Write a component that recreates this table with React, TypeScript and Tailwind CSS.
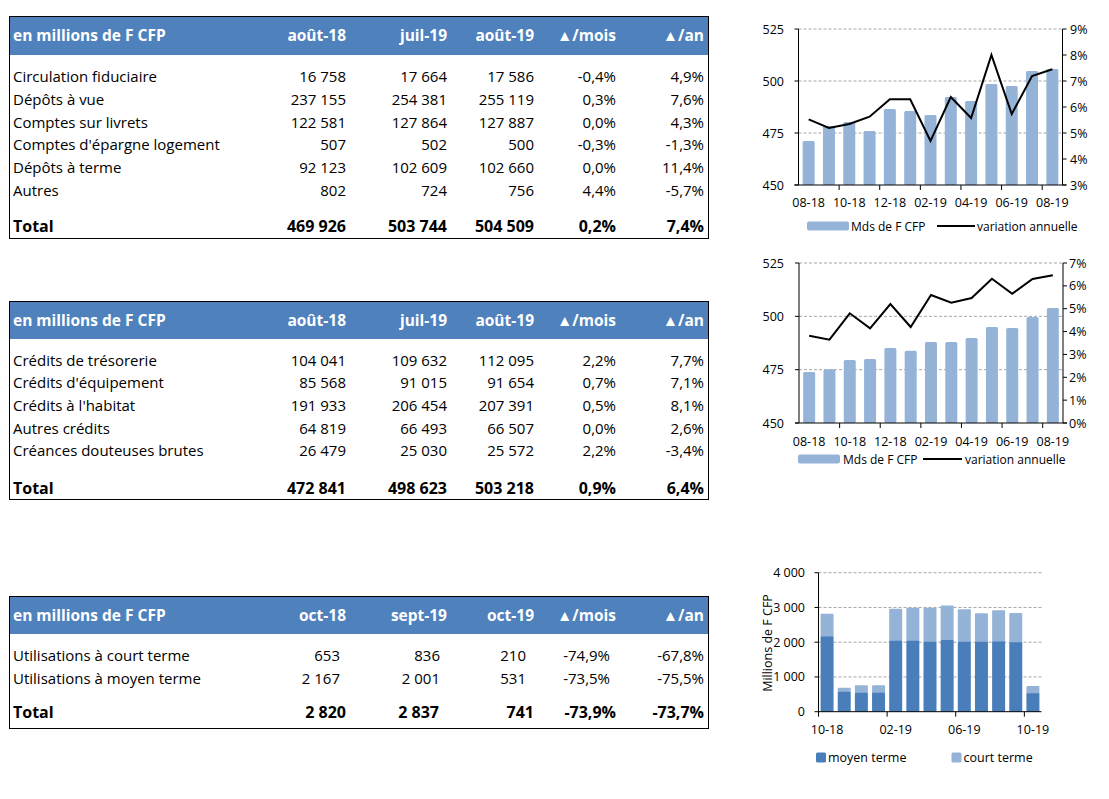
import React from "react";

const BAR = "#95b3d7";
const DARK = "#4a7ebb";
const GRID = "#a6a6a6";

type TRow = { label: string; v: string[]; pr?: string[] };

function DataTable({
  headers,
  rows,
  total,
  headerH,
  pt,
  totalMt,
  pb,
  className,
}: {
  headers: string[];
  rows: TRow[];
  total: TRow;
  headerH: string;
  pt: string;
  totalMt: string;
  pb: string;
  className?: string;
}) {
  const cols = "grid grid-cols-[236px_100px_101px_87px_82px_88px] pr-[4px]";
  return (
    <div className={`w-[700px] border border-black ${className ?? ""}`}>
      <div className={`${cols} ${headerH} bg-[#4f81bd] items-center text-white font-bold text-[15.5px]`}>
        {headers.map((h, i) => (
          <div key={i} className={i === 0 ? "pl-[3px] whitespace-nowrap" : "text-right whitespace-nowrap"}>
            {h}
          </div>
        ))}
      </div>
      <div className={`${pt} ${pb} text-[15px] text-black`}>
        {rows.map((r, ri) => (
          <div key={ri} className={`${cols} h-[22.66px] items-center`}>
            <div className="pl-[3px] whitespace-nowrap">{r.label}</div>
            {r.v.map((v, i) => (
              <div key={i} className={`text-right whitespace-nowrap ${r.pr ? r.pr[i] : ""}`}>
                {v}
              </div>
            ))}
          </div>
        ))}
        <div className={`${cols} h-[22.66px] items-center font-bold text-[16px] ${totalMt}`}>
          <div className="pl-[3px]">{total.label}</div>
          {total.v.map((v, i) => (
            <div key={i} className={`text-right whitespace-nowrap ${total.pr ? total.pr[i] : ""}`}>
              {v}
            </div>
          ))}
        </div>
      </div>
    </div>
  );
}

function ComboChart({
  top,
  L,
  R,
  T,
  B,
  leftLabels,
  rightLabels,
  barTops,
  lineYs,
  leftX,
  rightX,
  xLabelY,
  legY,
  legRectX,
  legText1X,
  legLine,
  legText2X,
}: {
  top: number;
  L: number;
  R: number;
  T: number;
  B: number;
  leftLabels: string[];
  rightLabels: string[];
  barTops: number[];
  lineYs: number[];
  leftX: number;
  rightX: number;
  xLabelY: number;
  legY: number;
  legRectX: number;
  legText1X: number;
  legLine: [number, number];
  legText2X: number;
}) {
  const n = 13;
  const cw = (R - L) / n;
  const xl = ["08-18", "10-18", "12-18", "02-19", "04-19", "06-19", "08-19"];
  const lstep = (B - T) / (leftLabels.length - 1);
  const rstep = (B - T) / (rightLabels.length - 1);
  return (
    <svg width={369} height={230} viewBox={`740 ${top} 369 230`} className="block">
      {leftLabels.slice(0, -1).map((_, k) => (
        <line key={k} x1={L} x2={R} y1={T + k * lstep} y2={T + k * lstep} stroke={GRID} strokeDasharray="3 2" strokeWidth={1} />
      ))}
      {barTops.map((y, i) => (
        <rect key={i} x={L + (i + 0.5) * cw - 6} y={y} width={12} height={B - y} fill={BAR} rx={1.5} />
      ))}
      <line x1={L} x2={L} y1={T} y2={B} stroke="#000" strokeWidth={1} />
      <line x1={R} x2={R} y1={T} y2={B} stroke="#000" strokeWidth={1} />
      <line x1={L - 4} x2={R + 4} y1={B} y2={B} stroke="#000" strokeWidth={1} />
      {leftLabels.map((_, k) => (
        <line key={k} x1={L - 4} x2={L} y1={T + k * lstep} y2={T + k * lstep} stroke="#000" />
      ))}
      {rightLabels.map((_, k) => (
        <line key={k} x1={R} x2={R + 4} y1={T + k * rstep} y2={T + k * rstep} stroke="#000" />
      ))}
      {[2, 4, 6, 8, 10, 12].map((k) => (
        <line key={k} x1={L + k * cw} x2={L + k * cw} y1={B} y2={B + 5} stroke="#000" />
      ))}
      <polyline
        points={lineYs.map((y, i) => `${L + (i + 0.5) * cw},${y}`).join(" ")}
        fill="none"
        stroke="#000"
        strokeWidth={2}
        strokeLinejoin="miter"
      />
      {leftLabels.map((t, k) => (
        <text key={k} x={leftX} y={T + k * lstep} textAnchor="end" dominantBaseline="central" fontSize={12.5} fill="#000">
          {t}
        </text>
      ))}
      {rightLabels.map((t, k) => (
        <text key={k} x={rightX} y={T + k * rstep} textAnchor="start" dominantBaseline="central" fontSize={12.5} fill="#000">
          {t}
        </text>
      ))}
      {xl.map((t, k) => (
        <text key={k} x={L + (2 * k + 0.5) * cw} y={xLabelY} textAnchor="middle" dominantBaseline="central" fontSize={12.5} fill="#000">
          {t}
        </text>
      ))}
      <rect x={legRectX} y={legY - 4.5} width={42} height={9} rx={2} fill={BAR} />
      <text x={legText1X} y={legY} dominantBaseline="central" fontSize={12} fill="#000">
        Mds de F CFP
      </text>
      <line x1={legLine[0]} x2={legLine[1]} y1={legY} y2={legY} stroke="#000" strokeWidth={2} />
      <text x={legText2X} y={legY} dominantBaseline="central" fontSize={12} fill="#000">
        variation annuelle
      </text>
    </svg>
  );
}

function StackChart() {
  const L = 818.5;
  const R = 1041.5;
  const B = 711.7;
  const T = 572.7;
  const sc = (B - T) / 4000;
  const cw = (R - L) / 13;
  const data: [number, number][] = [
    [2167, 653],
    [577, 115],
    [548, 212],
    [548, 212],
    [2040, 920],
    [2040, 948],
    [2010, 978],
    [2060, 995],
    [2010, 940],
    [2010, 826],
    [2020, 902],
    [2001, 836],
    [531, 210],
  ];
  const yl = ["4 000", "3 000", "2 000", "1 000", "0"];
  return (
    <svg width={369} height={230} viewBox="740 560 369 230" className="block">
      {[4000, 3000, 2000, 1000].map((v) => (
        <line key={v} x1={L} x2={R} y1={B - v * sc} y2={B - v * sc} stroke={GRID} strokeDasharray="3 2" />
      ))}
      {data.map(([m, c], i) => {
        const x = L + (i + 0.5) * cw - 6.5;
        const ym = B - m * sc;
        const yc = B - (m + c) * sc;
        return (
          <g key={i}>
            <rect x={x} y={yc} width={13} height={ym - yc + 1} fill={BAR} rx={1} />
            <rect x={x} y={ym} width={13} height={B - ym} fill={DARK} rx={1} />
          </g>
        );
      })}
      <line x1={L} x2={L} y1={T} y2={B + 5} stroke="#000" />
      <line x1={L} x2={R} y1={B} y2={B} stroke="#000" />
      {[0, 1000, 2000, 3000, 4000].map((v) => (
        <line key={v} x1={L - 4} x2={L} y1={B - v * sc} y2={B - v * sc} stroke="#000" />
      ))}
      {[4, 8, 12].map((k) => (
        <line key={k} x1={L + k * cw} x2={L + k * cw} y1={B} y2={B + 5} stroke="#000" />
      ))}
      {yl.map((t, k) => (
        <text key={k} x={805} y={T + k * (B - T) / 4} textAnchor="end" dominantBaseline="central" fontSize={12.5} fill="#000">
          {t}
        </text>
      ))}
      {["10-18", "02-19", "06-19", "10-19"].map((t, k) => (
        <text key={k} x={L + (4 * k + 0.5) * cw} y={729} textAnchor="middle" dominantBaseline="central" fontSize={12.5} fill="#000">
          {t}
        </text>
      ))}
      <text
        x={767}
        y={643}
        transform="rotate(-90 767 643)"
        textAnchor="middle"
        dominantBaseline="central"
        fontSize={12.5}
        fill="#000"
      >
        Millions de F CFP
      </text>
      <rect x={816} y={752.5} width={10} height={10} rx={1.5} fill={DARK} />
      <text x={828} y={757.5} dominantBaseline="central" fontSize={12.5} fill="#000">
        moyen terme
      </text>
      <rect x={951.5} y={752.5} width={10} height={10} rx={1.5} fill={BAR} />
      <text x={963.5} y={757.5} dominantBaseline="central" fontSize={12.5} fill="#000">
        court terme
      </text>
    </svg>
  );
}

export default function App() {
  const h1 = ["en millions de F CFP", "août-18", "juil-19", "août-19", "▲/mois", "▲/an"];
  const h3 = ["en millions de F CFP", "oct-18", "sept-19", "oct-19", "▲/mois", "▲/an"];
  const t1: TRow[] = [
    { label: "Circulation fiduciaire", v: ["16 758", "17 664", "17 586", "-0,4%", "4,9%"] },
    { label: "Dépôts à vue", v: ["237 155", "254 381", "255 119", "0,3%", "7,6%"] },
    { label: "Comptes sur livrets", v: ["122 581", "127 864", "127 887", "0,0%", "4,3%"] },
    { label: "Comptes d'épargne logement", v: ["507", "502", "500", "-0,3%", "-1,3%"] },
    { label: "Dépôts à terme", v: ["92 123", "102 609", "102 660", "0,0%", "11,4%"] },
    { label: "Autres", v: ["802", "724", "756", "4,4%", "-5,7%"] },
  ];
  const t2: TRow[] = [
    { label: "Crédits de trésorerie", v: ["104 041", "109 632", "112 095", "2,2%", "7,7%"] },
    { label: "Crédits d'équipement", v: ["85 568", "91 015", "91 654", "0,7%", "7,1%"] },
    { label: "Crédits à l'habitat", v: ["191 933", "206 454", "207 391", "0,5%", "8,1%"] },
    { label: "Autres crédits", v: ["64 819", "66 493", "66 507", "0,0%", "2,6%"] },
    { label: "Créances douteuses brutes", v: ["26 479", "25 030", "25 572", "2,2%", "-3,4%"] },
  ];
  const p3 = ["pr-[6px]", "pr-[7px]", "pr-[8px]", "pr-[6px]", ""];
  const t3: TRow[] = [
    { label: "Utilisations à court terme", v: ["653", "836", "210", "-74,9%", "-67,8%"], pr: p3 },
    { label: "Utilisations à moyen terme", v: ["2 167", "2 001", "531", "-73,5%", "-75,5%"], pr: p3 },
  ];

  return (
    <div className="w-[1109px] h-[799px] bg-white flex overflow-hidden font-['Open_Sans','Liberation_Sans',sans-serif] text-black">
      <div className="w-[740px] shrink-0 pl-[9px] pt-[16px] flex flex-col">
        <DataTable
          headers={h1}
          rows={t1}
          total={{ label: "Total", v: ["469 926", "503 744", "504 509", "0,2%", "7,4%"] }}
          headerH="h-[38px]"
          pt="pt-[10.3px]"
          totalMt="mt-[12.4px]"
          pb="pb-[1.3px]"
        />
        <DataTable
          className="mt-[62.8px]"
          headers={h1}
          rows={t2}
          total={{ label: "Total", v: ["472 841", "498 623", "503 218", "0,9%", "6,4%"] }}
          headerH="h-[37px]"
          pt="pt-[9.2px]"
          totalMt="mt-[13.7px]"
          pb="pb-[0.7px]"
        />
        <DataTable
          className="mt-[96.5px]"
          headers={h3}
          rows={t3}
          total={{
            label: "Total",
            v: ["2 820", "2 837", "741", "-73,9%", "-73,7%"],
            pr: ["", "pr-[8px]", "", "", ""],
          }}
          headerH="h-[37px]"
          pt="pt-[9.9px]"
          totalMt="mt-[10.7px]"
          pb="pb-[5px]"
        />
      </div>
      <div className="w-[369px] shrink-0 flex flex-col">
        <div className="mt-[10px]">
          <ComboChart
            top={10}
            L={798.5}
            R={1062.5}
            T={29}
            B={185}
            leftLabels={["525", "500", "475", "450"]}
            rightLabels={["9%", "8%", "7%", "6%", "5%", "4%", "3%"]}
            barTops={[141, 126, 122, 131, 109, 111, 115, 97, 101, 84, 86, 71, 69]}
            lineYs={[119.3, 128, 124, 116.7, 99.3, 99.3, 141, 97, 118, 55, 114, 76, 69.3]}
            leftX={784}
            rightX={1070}
            xLabelY={202}
            legY={226}
            legRectX={807}
            legText1X={851}
            legLine={[937, 975]}
            legText2X={977}
          />
        </div>
        <div className="mt-[10px]">
          <ComboChart
            top={250}
            L={799}
            R={1063}
            T={263}
            B={423}
            leftLabels={["525", "500", "475", "450"]}
            rightLabels={["7%", "6%", "5%", "4%", "3%", "2%", "1%", "0%"]}
            barTops={[372, 369.3, 360, 359, 348, 350.7, 342, 342, 338, 327, 328, 317, 308]}
            lineYs={[335.7, 339.7, 313.3, 328.3, 304, 327, 295, 302.7, 298, 278.7, 293.7, 279, 275.3]}
            leftX={784}
            rightX={1069}
            xLabelY={441}
            legY={459}
            legRectX={798}
            legText1X={843}
            legLine={[923, 962]}
            legText2X={965}
          />
        </div>
        <div className="mt-[80px]">
          <StackChart />
        </div>
      </div>
    </div>
  );
}
